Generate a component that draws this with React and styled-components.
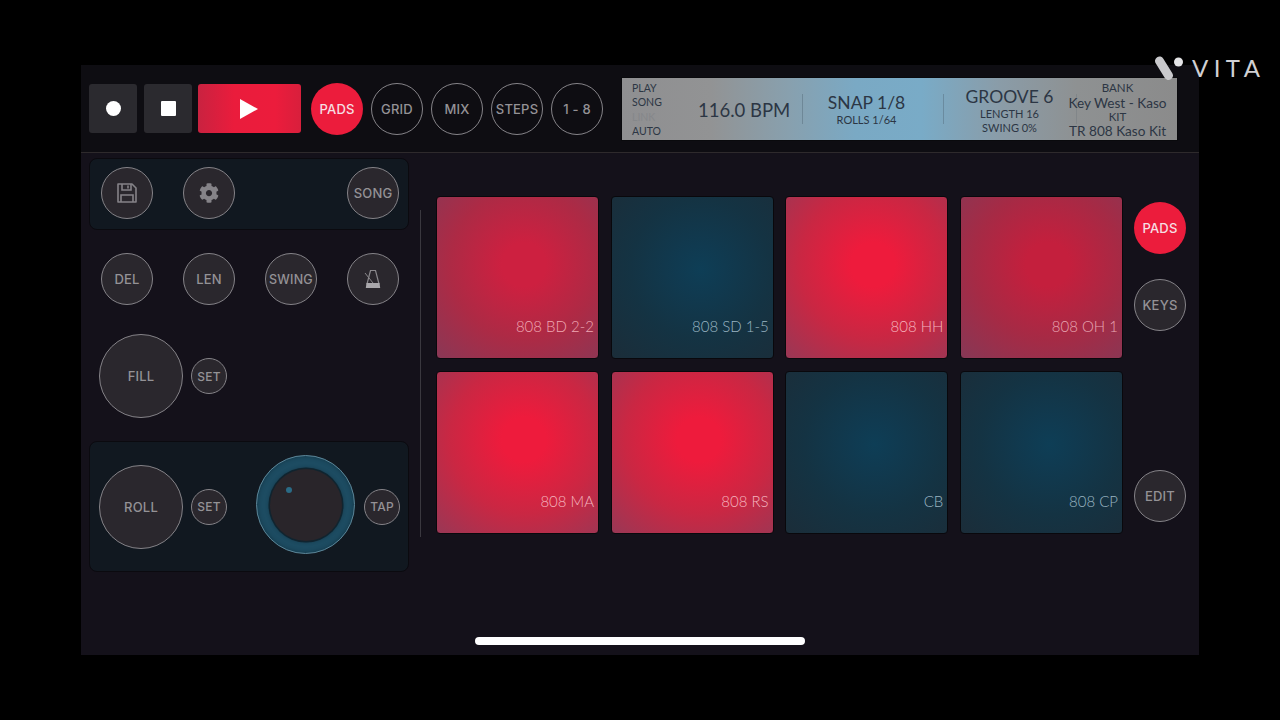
import React from "react";
import styled, { createGlobalStyle } from "styled-components";
import { FaCog } from "react-icons/fa";

const Global = createGlobalStyle`
  html, body { margin: 0; padding: 0; background: #000; width: 1280px; height: 720px; overflow: hidden; }
  #root { width: 1280px; height: 720px; padding: 65px 81px; box-sizing: border-box; position: relative; }
  * { box-sizing: border-box; }
`;

const Stage = styled.div`
  position: relative;
  width: 1118px;
  height: 590px;
  background: #14111a;
  font-family: Inter, "Liberation Sans", sans-serif;
  display: flex;
  flex-direction: column;
`;

const TopBar = styled.header`
  height: 88px;
  flex: none;
  background: #0e0d12;
  border-bottom: 1px solid #2e2a2c;
  display: flex;
  align-items: center;
  padding: 0 22px 0 8px;
`;

const Transport = styled.button`
  width: ${(p) => p.$w}px;
  height: 49px;
  margin-right: ${(p) => p.$mr}px;
  border: 0;
  padding: 0;
  border-radius: 3px;
  background: ${(p) =>
    p.$play ? "linear-gradient(90deg,#c92240 0%,#ea1c3c 35%,#ec1c3c 75%,#d81f3c 100%)" : "#2b2a2f"};
  display: flex;
  align-items: center;
  justify-content: center;
`;

const Dot = styled.span`
  width: 15px;
  height: 15px;
  margin-left: 1px;
  border-radius: 50%;
  background: #fff;
`;

const Square = styled.span`
  width: 15px;
  height: 15px;
  margin-left: 1px;
  border-radius: 1px;
  background: #fff;
`;

const Circle = styled.button`
  width: ${(p) => p.$d || 52}px;
  height: ${(p) => p.$d || 52}px;
  flex: none;
  border-radius: 50%;
  padding: 0;
  font-family: Inter, "Liberation Sans", sans-serif;
  font-weight: 500;
  font-size: ${(p) => p.$fs || 13}px;
  letter-spacing: 0.2px;
  white-space: nowrap;
  display: flex;
  align-items: center;
  justify-content: center;
  color: ${(p) => (p.$on ? "#f6dfe2" : "#949296")};
  background: ${(p) => (p.$on ? "#ec1c3c" : p.$flat ? "#0e0d12" : "#2a272d")};
  border: ${(p) => (p.$on ? "0" : "1.5px solid #858388")};
`;

const TabRow = styled.div`
  display: flex;
  gap: 8px;
  margin-right: 19px;
`;

const Lcd = styled.div`
  width: 555px;
  height: 62px;
  display: grid;
  grid-template-columns: 72px 108px 141px 133px 101px;
  align-items: center;
  color: #2c3644;
  font-family: Lato, "Noto Sans", sans-serif;
  background: linear-gradient(90deg, #8f8f91 0%, #929394 16%, #88a0ae 30%, #7aa9c4 42%, #79abc7 54%, #8a9ca8 68%, #8e9192 82%, #8b8b8b 100%);
  box-shadow: 0 0 0 1px #0a0a0d;
`;

const LcdStatus = styled.div`
  display: flex;
  flex-direction: column;
  padding: 2px 0 0 10px;
  font-size: 10.5px;
  line-height: 14.4px;
`;

const Faint = styled.span`
  color: #85878a;
`;

const Bpm = styled.div`
  font-size: 18.5px;
  padding: 2px 0 0 4px;
  white-space: nowrap;
  line-height: 40px;
`;

const LcdCell = styled.div`
  display: flex;
  flex-direction: column;
  align-items: center;
  justify-content: center;
  height: 100%;
  padding: 3px ${(p) => p.$pr || 0}px 0 0;
  white-space: nowrap;
`;

const DividedCell = styled(LcdCell)`
  position: relative;
  &::before {
    content: "";
    position: absolute;
    left: 0;
    top: 16px;
    bottom: 16px;
    width: 1px;
    background: rgba(60, 75, 90, ${(p) => p.$line || 0.3});
  }
`;

const LcdBig = styled.div`
  font-size: ${(p) => p.$fs}px;
  line-height: ${(p) => p.$lh}px;
`;

const LcdSmall = styled.div`
  font-size: 11px;
  line-height: 14px;
`;

const BankLine = styled.div`
  font-size: ${(p) => p.$fs || 13.6}px;
  line-height: 14.4px;
`;

const Main = styled.main`
  flex: 1;
  display: flex;
  padding-left: 8px;
`;

const LeftPanel = styled.section`
  width: 320px;
  flex: none;
  padding-top: 5px;
  display: flex;
  flex-direction: column;
`;

const Card = styled.div`
  width: 320px;
  background: #111820;
  border: 1px solid #0b0a0f;
  border-radius: 8px;
  display: flex;
  align-items: center;
`;

const SaveCard = styled(Card)`
  height: 72px;
  padding: 0 9px 3px 11px;
  gap: 30px;
`;

const Push = styled.div`
  flex: 1;
`;

const FourRow = styled.div`
  display: flex;
  justify-content: space-between;
  padding: 0 10px 0 12px;
  margin-top: 23px;
`;

const FillRow = styled.div`
  display: flex;
  align-items: center;
  gap: 8px;
  padding-left: 10px;
  margin-top: 29px;
`;

const RollCard = styled(Card)`
  height: 131px;
  margin-top: 23px;
  padding-left: 9px;
`;

const RollGroup = styled.div`
  display: flex;
  align-items: center;
  gap: 8px;
`;

const Knob = styled.div`
  position: relative;
  width: 99px;
  height: 99px;
  flex: none;
  margin: -4px 9px 0 29px;
  border-radius: 50%;
  background: #1d4c62;
  border: 1px solid #5c8597;
  box-shadow: inset 0 0 4px rgba(10, 30, 40, 0.5);
  display: flex;
  align-items: center;
  justify-content: center;
`;

const KnobCap = styled.div`
  position: relative;
  width: 72px;
  height: 72px;
  border-radius: 50%;
  background: #29252a;
  box-shadow: 0 0 0 1.5px #10242f, 0 0 4px #10242f;
`;

const KnobMark = styled.span`
  position: absolute;
  left: 16px;
  top: 18px;
  width: 6px;
  height: 6px;
  border-radius: 50%;
  background: #2a6b86;
`;

const Rule = styled.div`
  width: 1px;
  height: 327px;
  flex: none;
  margin: 57px 15px 0 11px;
  background: #3a383f;
`;

const PadGrid = styled.div`
  display: grid;
  grid-template-columns: repeat(4, 163px);
  grid-auto-rows: 163px;
  gap: 12px 11.67px;
  padding-top: 43px;
`;

const Pad = styled.button`
  border: 1px solid #09080c;
  border-radius: 4px;
  padding: 0 4px 22px 0;
  display: flex;
  align-items: flex-end;
  justify-content: flex-end;
  font-family: Lato, "Noto Sans", sans-serif;
  font-weight: 300;
  font-size: 15px;
  line-height: 20px;
  color: ${(p) => p.$text};
  background: ${(p) => p.$bg};
`;

const RightCol = styled.div`
  width: 52px;
  margin-left: 11px;
  padding-top: 49px;
  display: flex;
  flex-direction: column;
`;

const RightButton = styled(Circle)`
  margin-top: ${(p) => p.$mt || 0}px;
`;

const HomeBar = styled.div`
  position: absolute;
  left: 394px;
  top: 572px;
  width: 330px;
  height: 8px;
  border-radius: 4px;
  background: #fff;
`;

const Watermark = styled.div`
  position: absolute;
  left: 1154px;
  top: 54px;
  display: flex;
  align-items: center;
  gap: 7px;
  color: #d0d0d3;
  font-family: Lato, "Noto Sans", sans-serif;
  font-size: 24px;
  letter-spacing: 5.4px;
  line-height: 28px;
`;

const red = (core, mid, edge) =>
  `radial-gradient(circle at 54% 42%, ${core} 0px, ${core} 22px, ${mid} 74px, ${edge} 135px)`;
const blue = "radial-gradient(circle at 55% 45%, #0e3e56 0px, #103a50 24px, #143343 70px, #1b2d39 125px)";

const pads = [
  { label: "808 BD 2-2", bg: red("#cd2040", "#ad2a45", "#843a58"), text: "#efa8b4" },
  { label: "808 SD 1-5", bg: blue, text: "#9ab5c2" },
  { label: "808 HH", bg: red("#ee1b3c", "#c92743", "#923a58"), text: "#f5b4bf" },
  { label: "808 OH 1", bg: red("#c41f3d", "#a62a45", "#823a58"), text: "#e7a6b3" },
  { label: "808 MA", bg: red("#ee1b3c", "#ca2743", "#923a58"), text: "#f5b4bf" },
  { label: "808 RS", bg: red("#ee1b3c", "#ca2743", "#923a58"), text: "#f5b4bf" },
  { label: "CB", bg: blue, text: "#9ab5c2" },
  { label: "808 CP", bg: blue, text: "#9ab5c2" },
];

const SaveIcon = () => (
  <svg width="22" height="22" viewBox="0 0 22 22" fill="none" stroke="#858388" strokeWidth="1.6">
    <path d="M2 2h14l4 4v14H2z" strokeLinejoin="round" />
    <path d="M6 2v6h9V2M12 3.5v3M5 20v-7h12v7" />
  </svg>
);

const MetronomeIcon = () => (
  <svg width="18" height="20" viewBox="0 0 18 20" fill="none">
    <path d="M6.5 1.5h5L15 15H3z" stroke="#8a888c" strokeWidth="1.2" />
    <path d="M2.5 14h13l.7 5H1.8z" fill="#a9a7ab" />
    <path d="M1 4l8 10" stroke="#8a888c" strokeWidth="1" />
  </svg>
);

const LogoMark = () => (
  <svg width="31" height="26" viewBox="0 0 31 26">
    <path d="M5.5 6L14.5 20.5" stroke="#c9c9cc" strokeWidth="9" strokeLinecap="round" />
    <circle cx="24.5" cy="7" r="4.5" fill="#e4e4e6" />
  </svg>
);

export default function App() {
  return (
    <>
      <Global />
      <Stage>
        <TopBar>
          <Transport $w={48} $mr={7}><Dot /></Transport>
          <Transport $w={48} $mr={6}><Square /></Transport>
          <Transport $w={104} $mr={10} $play>
            <svg width="18" height="22" viewBox="0 0 18 22"><path d="M0 1l18 10L0 21z" fill="#fff" /></svg>
          </Transport>
          <TabRow>
            <Circle $on>PADS</Circle>
            <Circle $flat>GRID</Circle>
            <Circle $flat>MIX</Circle>
            <Circle $flat>STEPS</Circle>
            <Circle $flat>1 - 8</Circle>
          </TabRow>
          <Lcd>
            <LcdStatus>
              <span>PLAY</span>
              <span>SONG</span>
              <Faint>LINK</Faint>
              <span>AUTO</span>
            </LcdStatus>
            <Bpm>116.0 BPM</Bpm>
            <DividedCell $pr={12}>
              <LcdBig $fs={17.5} $lh={20}>SNAP 1/8</LcdBig>
              <LcdSmall>ROLLS 1/64</LcdSmall>
            </DividedCell>
            <DividedCell>
              <LcdBig $fs={17.5} $lh={21}>GROOVE 6</LcdBig>
              <LcdSmall>LENGTH 16</LcdSmall>
              <LcdSmall>SWING 0%</LcdSmall>
            </DividedCell>
            <DividedCell $pr={18} $line={0.15}>
              <BankLine $fs={11.5}>BANK</BankLine>
              <BankLine>Key West - Kaso</BankLine>
              <BankLine $fs={11.5}>KIT</BankLine>
              <BankLine>TR 808 Kaso Kit</BankLine>
            </DividedCell>
          </Lcd>
        </TopBar>
        <Main>
          <LeftPanel>
            <SaveCard>
              <Circle><SaveIcon /></Circle>
              <Circle><FaCog size={20} color="#858388" /></Circle>
              <Push />
              <Circle>SONG</Circle>
            </SaveCard>
            <FourRow>
              <Circle>DEL</Circle>
              <Circle>LEN</Circle>
              <Circle $fs={12.5}>SWING</Circle>
              <Circle><MetronomeIcon /></Circle>
            </FourRow>
            <FillRow>
              <Circle $d={84}>FILL</Circle>
              <Circle $d={36} $fs={12}>SET</Circle>
            </FillRow>
            <RollCard>
              <RollGroup>
                <Circle $d={84}>ROLL</Circle>
                <Circle $d={36} $fs={12}>SET</Circle>
              </RollGroup>
              <Knob>
                <KnobCap><KnobMark /></KnobCap>
              </Knob>
              <Circle $d={36} $fs={12}>TAP</Circle>
            </RollCard>
          </LeftPanel>
          <Rule />
          <PadGrid>
            {pads.map((p) => (
              <Pad key={p.label} $bg={p.bg} $text={p.text}>{p.label}</Pad>
            ))}
          </PadGrid>
          <RightCol>
            <RightButton $on>PADS</RightButton>
            <RightButton $mt={25}>KEYS</RightButton>
            <RightButton $mt={139}>EDIT</RightButton>
          </RightCol>
        </Main>
        <HomeBar />
      </Stage>
      <Watermark>
        <LogoMark />
        VITA
      </Watermark>
    </>
  );
}
